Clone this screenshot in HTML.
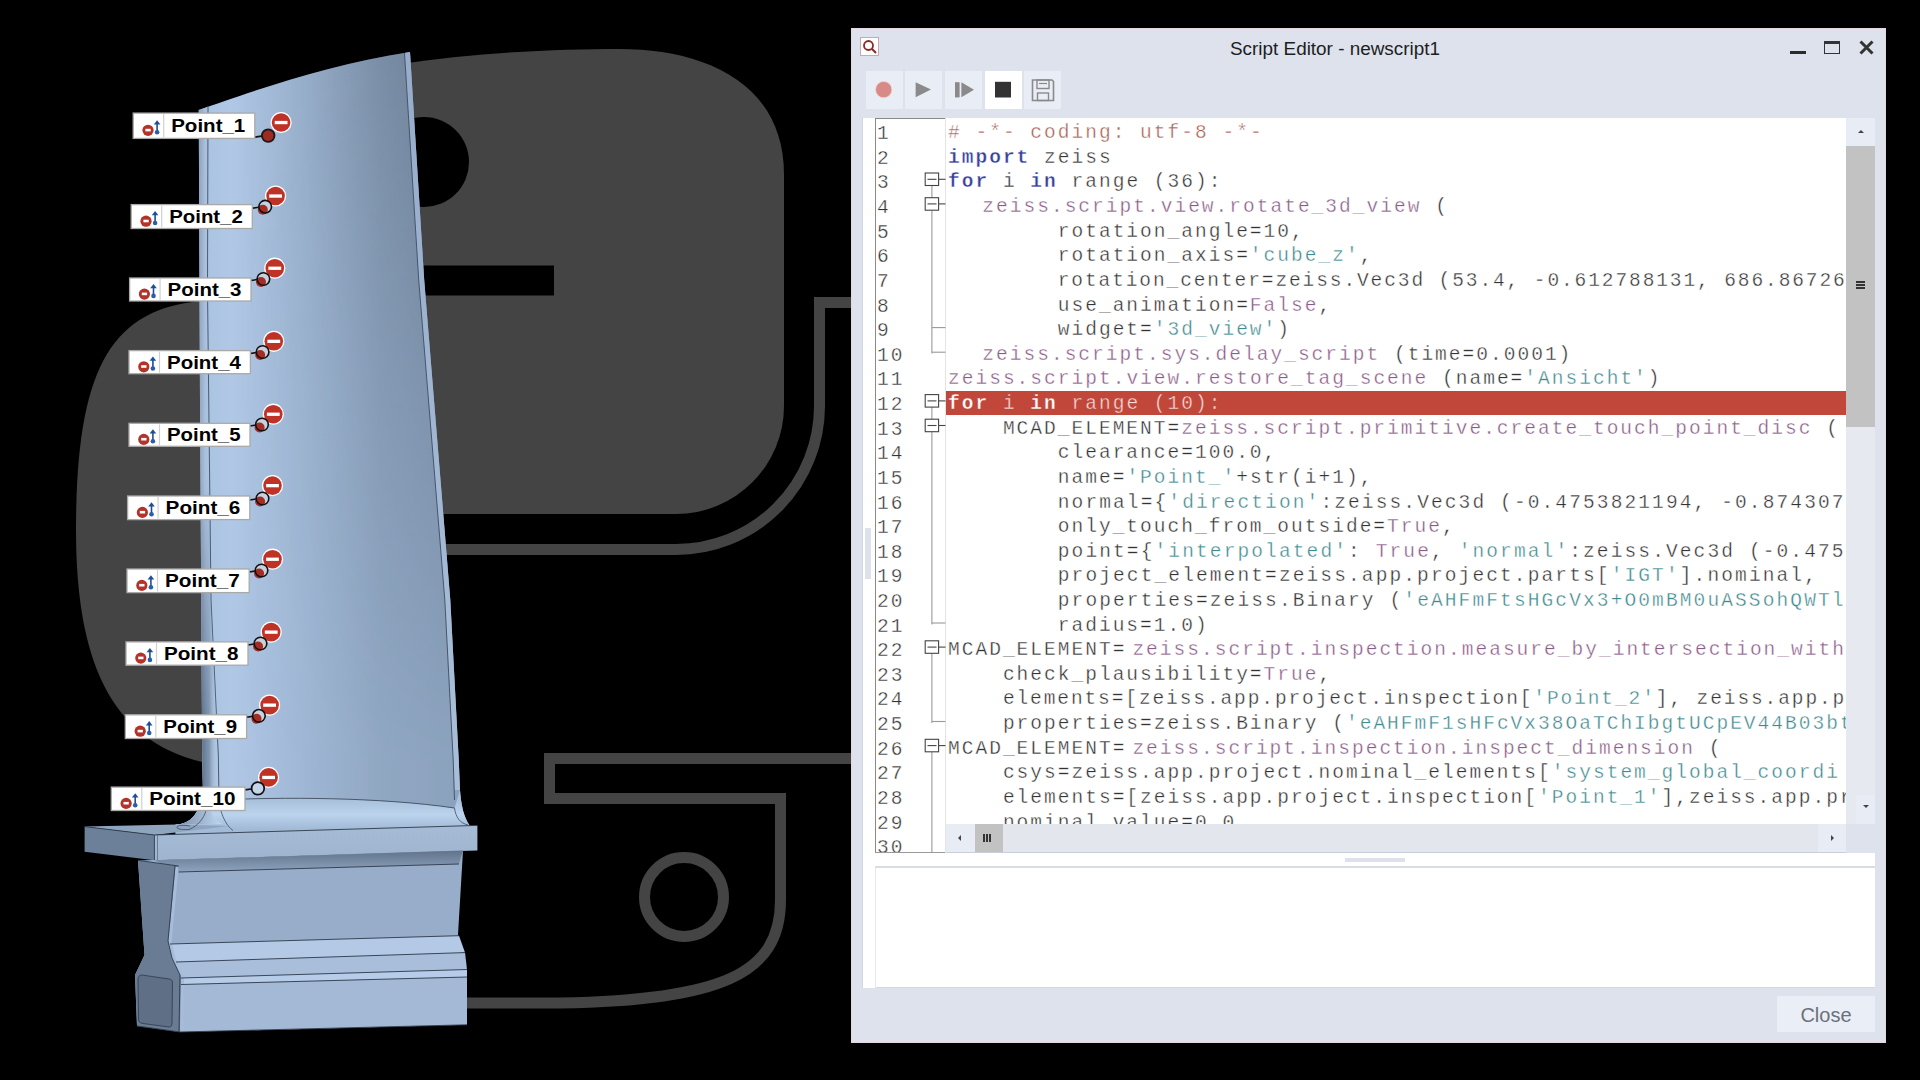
<!DOCTYPE html>
<html><head><meta charset="utf-8">
<style>
html,body{margin:0;padding:0;background:#000;width:1920px;height:1080px;overflow:hidden}
#scene{position:absolute;left:0;top:0}
.lt{font-family:"Liberation Sans",sans-serif;font-weight:bold;font-size:18px;fill:#000}
#win{position:absolute;left:851px;top:28px;width:1035px;height:1015px;background:#dde2ec;box-shadow:0 0 0 1px #e6d6de inset}
#title{position:absolute;left:379px;top:0;height:40px;white-space:nowrap;font-family:"Liberation Sans",sans-serif;font-size:18.9px;line-height:42px;color:#1e1e1e}
.tb{position:absolute;top:43px;width:37px;height:38px;background:#e9edf5}
#edit{position:absolute;left:11px;top:90px;width:1013px;height:870px;background:#fff;border-left:1px solid #d2d6dd;box-sizing:border-box}
#gutter{position:absolute;left:12px;top:0;width:71px;height:735px;border-left:1px solid #8a8a8a;border-top:1px solid #8a8a8a;border-bottom:1px solid #999;box-sizing:border-box;overflow:hidden}
.num{position:absolute;left:1px;height:24.55px;font-family:"Liberation Mono",monospace;font-size:19.5px;letter-spacing:2.02px;line-height:24.55px;color:#333;white-space:pre;-webkit-text-stroke:0.35px #fff}
#sepline{position:absolute;left:82px;top:0;width:1px;height:735px;background:#e4e4e4}
#code{position:absolute;left:83px;top:0;width:900px;height:706px;overflow:hidden}
.ln{position:absolute;height:24.55px;font-family:"Liberation Mono",monospace;font-size:19.5px;letter-spacing:2.02px;line-height:24.55px;white-space:pre;color:#333;-webkit-text-stroke:0.35px #fff}
.k{color:#363f9c;font-weight:bold}
.d{color:#333}
.p{color:#8a5a88}
.s{color:#3f8a8f}
.c{color:#a85e52}
.hk{color:#fff;font-weight:bold;-webkit-text-stroke:0.35px #c0473a}
.hd{color:#f6dcd8;-webkit-text-stroke:0.35px #c0473a}
#hl{position:absolute;left:0;top:272.5px;width:900px;height:24px;background:#c0473a}
#vsb{position:absolute;left:983px;top:0;width:29px;height:706px;background:#e6eaf0}
#hsb{position:absolute;left:83px;top:706px;width:900px;height:29px;background:#e3e7ed;border-bottom:1px solid #c8ceda;box-sizing:border-box}
#corner{position:absolute;left:983px;top:706px;width:29px;height:29px;background:#dde2ec}
#outsep{position:absolute;left:12px;top:748px;width:1000px;height:2px;background:#d8dce4}
#closebtn{position:absolute;left:926px;top:968px;width:98px;height:36px;background:#eaeef6;font-family:"Liberation Sans",sans-serif;font-size:20px;color:#6b717a;text-align:center;line-height:38px}
</style></head><body>
<svg id="scene" width="1920" height="1080" viewBox="0 0 1920 1080">
<defs>
 <linearGradient id="bladeG" x1="199" y1="0" x2="460" y2="0" gradientUnits="userSpaceOnUse">
  <stop offset="0" stop-color="#a8c2e0"/>
  <stop offset="0.12" stop-color="#b0c8e6"/>
  <stop offset="0.38" stop-color="#a2bad7"/>
  <stop offset="0.7" stop-color="#92a9c5"/>
  <stop offset="1" stop-color="#8ea5c1"/>
 </linearGradient>
 <linearGradient id="bladeV" x1="230" y1="760" x2="430" y2="90" gradientUnits="userSpaceOnUse">
  <stop offset="0" stop-color="#000" stop-opacity="0"/>
  <stop offset="0.45" stop-color="#000" stop-opacity="0.03"/>
  <stop offset="1" stop-color="#1a2535" stop-opacity="0.22"/>
 </linearGradient>
 <linearGradient id="bladeH" x1="240" y1="0" x2="440" y2="0" gradientUnits="userSpaceOnUse">
  <stop offset="0" stop-color="#2a3442" stop-opacity="0"/>
  <stop offset="0.3" stop-color="#2a3442" stop-opacity="0.08"/>
  <stop offset="1" stop-color="#2a3442" stop-opacity="0.34"/>
 </linearGradient>
 <linearGradient id="bladeMG" x1="0" y1="60" x2="0" y2="760" gradientUnits="userSpaceOnUse">
  <stop offset="0" stop-color="#fff"/>
  <stop offset="0.45" stop-color="#888"/>
  <stop offset="1" stop-color="#111"/>
 </linearGradient>
 <mask id="bladeM" maskUnits="userSpaceOnUse" x="0" y="0" width="1920" height="1080"><rect x="0" y="0" width="1920" height="1080" fill="url(#bladeMG)"/></mask>
 <linearGradient id="trailG" x1="0" y1="50" x2="0" y2="800" gradientUnits="userSpaceOnUse">
  <stop offset="0" stop-color="#97accb"/>
  <stop offset="1" stop-color="#a9bfd9"/>
 </linearGradient>
 <linearGradient id="leadG" x1="199" y1="0" x2="215" y2="0" gradientUnits="userSpaceOnUse">
  <stop offset="0" stop-color="#8ea4c0"/>
  <stop offset="0.4" stop-color="#aac1dd"/>
  <stop offset="1" stop-color="#b2c9e5"/>
 </linearGradient>
 <linearGradient id="leadDG" x1="202" y1="0" x2="218" y2="0" gradientUnits="userSpaceOnUse">
  <stop offset="0" stop-color="#5f7189" stop-opacity="0.95"/>
  <stop offset="0.45" stop-color="#7489a3" stop-opacity="0.8"/>
  <stop offset="1" stop-color="#b5cbe6" stop-opacity="0"/>
 </linearGradient>
 <linearGradient id="leadMG" x1="0" y1="480" x2="0" y2="720" gradientUnits="userSpaceOnUse">
  <stop offset="0" stop-color="#000"/>
  <stop offset="1" stop-color="#fff"/>
 </linearGradient>
 <mask id="leadM" maskUnits="userSpaceOnUse" x="0" y="0" width="1920" height="1080"><rect x="0" y="0" width="1920" height="1080" fill="url(#leadMG)"/></mask>
 <linearGradient id="filL" x1="180" y1="0" x2="222" y2="0" gradientUnits="userSpaceOnUse">
  <stop offset="0" stop-color="#8094ad"/>
  <stop offset="0.5" stop-color="#9fb4cf"/>
  <stop offset="1" stop-color="#c2d8f2"/>
 </linearGradient>
 <linearGradient id="filG" x1="0" y1="800" x2="0" y2="829" gradientUnits="userSpaceOnUse">
  <stop offset="0" stop-color="#aac1dc"/>
  <stop offset="0.5" stop-color="#bcd3ee"/>
  <stop offset="1" stop-color="#a3bad6"/>
 </linearGradient>
 <linearGradient id="bandA" x1="0" y1="851" x2="0" y2="872" gradientUnits="userSpaceOnUse">
  <stop offset="0" stop-color="#62748c"/>
  <stop offset="1" stop-color="#8ea3bf"/>
 </linearGradient>
 <linearGradient id="frontG" x1="0" y1="826" x2="0" y2="860" gradientUnits="userSpaceOnUse">
  <stop offset="0" stop-color="#a6bbd6"/>
  <stop offset="1" stop-color="#9fb4cf"/>
 </linearGradient>
 <linearGradient id="shankG" x1="0" y1="850" x2="0" y2="1032" gradientUnits="userSpaceOnUse">
  <stop offset="0" stop-color="#6a7d96"/>
  <stop offset="0.08" stop-color="#8da3bf"/>
  <stop offset="0.45" stop-color="#95abc7"/>
  <stop offset="1" stop-color="#a0b6d2"/>
 </linearGradient>
</defs>
<!-- python logo -->
<g fill="#444">
 <path d="M200,301 C110,310 76,370 76,530 C76,660 110,740 202,762 L300,762 L300,301 Z"/>
 <path d="M400,64 C480,52 560,49 620,49 C700,49 784,80 784,175 L784,406 A108,108 0 0 1 676,514 L400,514 Z"/>
</g>
<circle cx="424" cy="162" r="45" fill="#000"/>
<rect x="400" y="265.5" width="154" height="30" fill="#000"/>
<g fill="none" stroke="#444" stroke-width="11">
 <path d="M860,302.5 L819.5,302.5 L819.5,406 A143.5,143.5 0 0 1 676,549.5 L400,549.5"/>
 <path d="M860,758.5 L549.5,758.5 L549.5,798.5 L780.5,798.5 L780.5,900 C780.5,975 720,1000 560,1003 L440,1003"/>
 <circle cx="684" cy="897" r="39.5"/>
</g>
<!-- blade -->
<path id="bladeP" d="M198.75,110 C250,92 330,64 410,52 L424.2,280 L450.3,600 L458.75,760 L460,790 C461,805 464,818 470,826 L470,840 L175.6,840 L175.6,824.5 C190,824 200,815 203,790 L202.2,755 L200,400 Z" fill="url(#bladeG)"/>
<path d="M198.75,110 C250,92 330,64 410,52 L424.2,280 L450.3,600 L458.75,760 L460,790 C461,805 464,818 470,826 L470,840 L175.6,840 L175.6,824.5 C190,824 200,815 203,790 L202.2,755 L200,400 Z" fill="url(#bladeH)" mask="url(#bladeM)"/>
<!-- trailing strip -->
<path d="M404.5,53 L410,52 L424.2,280 L450.3,600 L458.75,760 L460,790 L454.5,790 L453.2,760 L444.8,600 L418.7,280 Z" fill="url(#trailG)"/>
<path d="M404.5,53 L418.7,280 L444.8,600 L453.2,760 L454.5,800" fill="none" stroke="#46566a" stroke-width="1"/>
<!-- leading strip -->
<path d="M198.75,110 L208,107 L207.5,290 L211,600 L218.3,755 L219,800 L203,800 L202.2,755 L200,400 Z" fill="url(#leadG)"/>
<path d="M208,106 L207.5,290 L211,600 L218.3,755 L219,800" fill="none" stroke="#4a5a70" stroke-width="1"/>
<path d="M200,420 L202.2,755 L203,790 C202,805 199,812 196,816 L214,812 C216,805 217,798 218.5,790 L218.3,755 L211,600 L208,420 Z" fill="url(#leadDG)" mask="url(#leadM)"/>
<!-- root fillet -->
<path d="M205,800 C260,797 380,797 454.5,808 L460,790 C461,805 464,818 470,826 L470,840 L175.6,840 L175.6,824.5 C190,824 200,815 203,790 Z" fill="url(#filG)"/>
<path d="M175.6,824.5 C190,824 200,815 203,790 L206,790 C206,806 212,818 222,824 Z" fill="url(#filL)"/>
<path d="M84.6,826.6 L177,824.5 L230,826 L154.4,835 Z" fill="#8fa4be"/>
<path d="M205.8,811 C204,818 198,826 189,829.5 C183,830 176,829 177,827 C178,825 185,825 190,826" fill="none" stroke="#3e4c5e" stroke-width="0.8"/>
<path d="M219,800 C280,797 380,797 454.5,808" fill="none" stroke="#3e4c5e" stroke-width="0.9"/>
<path d="M221,811 C223,818 227,826 233,830.6" fill="none" stroke="#3e4c5e" stroke-width="0.8"/>
<path d="M454.5,808 C456,818 460,823 468,825" fill="none" stroke="#3e4c5e" stroke-width="0.8"/>
<!-- platform -->
<path d="M84.6,826.6 L154.4,835 L154.4,860.3 L84.6,851.8 Z" fill="#6d809a"/>
<path d="M154.4,835 L477.4,825.4 L477.4,850.6 L154.4,860.3 Z" fill="url(#frontG)"/>
<path d="M84.6,826.6 L154.4,835 L477.4,825.4" fill="none" stroke="#2d3a4a" stroke-width="0.9"/>
<path d="M154.4,835 L154.4,860.3" fill="none" stroke="#2d3a4a" stroke-width="0.8"/>
<path d="M157.5,834.9 L157.5,860.2" fill="none" stroke="#55657a" stroke-width="0.7"/>
<!-- shank -->
<path d="M138,860.4 L463,850.6 L457.7,940 L467,975 L467,1024.8 L180,1032 L137,1026 L135,975 L144.5,955 Z" fill="#97adc9"/>
<path d="M154.4,860.3 L463,850.6 L459,864 L178.6,872 Z" fill="url(#bandA)"/>
<path d="M170,944 L459,935.7 L465,952.6 L176,962 Z" fill="#b3c9e6"/>
<path d="M176,962 L465,952.6 L467,969.5 L181,978 Z" fill="#a8bedb"/>
<path d="M181,978 L467,969.5 L467,977 L181,984.5 Z" fill="#b6cce8"/>
<path d="M181,984.5 L467,977 L467,1024.8 L180,1032 Z" fill="#a3b9d5"/>
<path d="M138,860.4 L178.6,866 L168,940 L172,958 L181,975 L180,1032 L137,1026 L135,975 L144.5,955 Z" fill="#6a7c94"/>
<path d="M177,867 L170,942 L174,959 L182.5,976 L182,1031" fill="none" stroke="#a6bcd8" stroke-width="3.2"/>
<path d="M178.6,872 L459,864 M170,944 L459,935.7 M176,962 L465,952.6 M181,978 L467,969.5 M181,984.5 L467,977 M175,866 L168,941 L172,958 L180,975 L179,1032 M138,860.4 L178.6,866 M137,1026 L180,1032 L467,1024.8" fill="none" stroke="#2d3a4a" stroke-width="0.9"/>
<path d="M142,975 C139,975 138,977 138,980 L138.5,1019 C138.5,1022 140,1023 143,1023.5 L169,1027 C171,1027 172,1026 172,1023 L172.5,983 C172.5,980 171,979 169,979 Z" fill="#5e6f86" stroke="#2d3a4a" stroke-width="0.8"/>
<!-- labels -->
<line x1="254.8" y1="137.1" x2="263.2" y2="135.9" stroke="#111" stroke-width="1.6"/>
<circle cx="281.1" cy="122.5" r="10.6" fill="#fff"/>
<circle cx="281.1" cy="122.5" r="9.3" fill="#bf3327"/>
<rect x="274.7" y="120.9" width="12.8" height="3.3" fill="#fff"/>
<circle cx="268.2" cy="135.6" r="6.3" fill="#9e2a22" stroke="#181818" stroke-width="1.8"/>
<rect x="133.2" y="113.1" width="121.6" height="25.3" fill="#fff" stroke="#a9a9a9" stroke-width="1.3"/>
<line x1="163.7" y1="114.1" x2="163.7" y2="137.4" stroke="#d0d0d0" stroke-width="1.2"/>
<circle cx="148.0" cy="130.3" r="5.6" fill="#b3322a"/>
<rect x="145.4" y="128.8" width="5.3" height="2.6" fill="#fff"/>
<line x1="157.1" y1="123.8" x2="157.1" y2="132.2" stroke="#1c4f96" stroke-width="1.6"/>
<path d="M153.8,124.5 L157.1,120.2 L160.4,124.5 Z" fill="#1c4f96"/>
<circle cx="157.1" cy="132.2" r="2.3" fill="#2a5ea8"/>
<text x="171.2" y="132.3" class="lt" textLength="74.1" lengthAdjust="spacingAndGlyphs">Point_1</text>
<line x1="252.3" y1="208.2" x2="260.2" y2="207.0" stroke="#111" stroke-width="1.6"/>
<circle cx="275.6" cy="196.0" r="10.6" fill="#fff"/>
<circle cx="275.6" cy="196.0" r="9.3" fill="#bf3327"/>
<rect x="269.2" y="194.4" width="12.8" height="3.3" fill="#fff"/>
<circle cx="265.2" cy="206.7" r="6.3" fill="#c8d2de"/>
<circle cx="262.8" cy="209.7" r="5" fill="#a32d25"/>
<circle cx="265.2" cy="206.7" r="6.3" fill="none" stroke="#111" stroke-width="1.6"/>
<rect x="131.2" y="204.6" width="121.1" height="23.9" fill="#fff" stroke="#a9a9a9" stroke-width="1.3"/>
<line x1="161.7" y1="205.6" x2="161.7" y2="227.5" stroke="#d0d0d0" stroke-width="1.2"/>
<circle cx="146.0" cy="221.2" r="5.6" fill="#b3322a"/>
<rect x="143.4" y="219.7" width="5.3" height="2.6" fill="#fff"/>
<line x1="155.1" y1="214.6" x2="155.1" y2="223.0" stroke="#1c4f96" stroke-width="1.6"/>
<path d="M151.8,215.2 L155.1,211.0 L158.4,215.2 Z" fill="#1c4f96"/>
<circle cx="155.1" cy="223.0" r="2.3" fill="#2a5ea8"/>
<text x="169.2" y="223.2" class="lt" textLength="73.6" lengthAdjust="spacingAndGlyphs">Point_2</text>
<line x1="251.0" y1="280.5" x2="258.4" y2="279.3" stroke="#111" stroke-width="1.6"/>
<circle cx="274.8" cy="268.2" r="10.6" fill="#fff"/>
<circle cx="274.8" cy="268.2" r="9.3" fill="#bf3327"/>
<rect x="268.4" y="266.6" width="12.8" height="3.3" fill="#fff"/>
<circle cx="263.4" cy="279.0" r="6.3" fill="#c8d2de"/>
<circle cx="261.0" cy="282.0" r="5" fill="#a32d25"/>
<circle cx="263.4" cy="279.0" r="6.3" fill="none" stroke="#111" stroke-width="1.6"/>
<rect x="129.6" y="278.0" width="121.4" height="23.0" fill="#fff" stroke="#a9a9a9" stroke-width="1.3"/>
<line x1="160.1" y1="279.0" x2="160.1" y2="300.0" stroke="#d0d0d0" stroke-width="1.2"/>
<circle cx="144.4" cy="294.1" r="5.6" fill="#b3322a"/>
<rect x="141.8" y="292.6" width="5.3" height="2.6" fill="#fff"/>
<line x1="153.5" y1="287.5" x2="153.5" y2="295.9" stroke="#1c4f96" stroke-width="1.6"/>
<path d="M150.2,288.2 L153.5,283.9 L156.8,288.2 Z" fill="#1c4f96"/>
<circle cx="153.5" cy="295.9" r="2.3" fill="#2a5ea8"/>
<text x="167.6" y="296.1" class="lt" textLength="73.9" lengthAdjust="spacingAndGlyphs">Point_3</text>
<line x1="250.4" y1="353.5" x2="257.6" y2="352.3" stroke="#111" stroke-width="1.6"/>
<circle cx="273.8" cy="341.3" r="10.6" fill="#fff"/>
<circle cx="273.8" cy="341.3" r="9.3" fill="#bf3327"/>
<rect x="267.4" y="339.7" width="12.8" height="3.3" fill="#fff"/>
<circle cx="262.6" cy="352.0" r="6.3" fill="#c8d2de"/>
<circle cx="260.2" cy="355.0" r="5" fill="#a32d25"/>
<circle cx="262.6" cy="352.0" r="6.3" fill="none" stroke="#111" stroke-width="1.6"/>
<rect x="129.0" y="350.6" width="121.4" height="23.1" fill="#fff" stroke="#a9a9a9" stroke-width="1.3"/>
<line x1="159.5" y1="351.6" x2="159.5" y2="372.7" stroke="#d0d0d0" stroke-width="1.2"/>
<circle cx="143.8" cy="366.8" r="5.6" fill="#b3322a"/>
<rect x="141.2" y="365.2" width="5.3" height="2.6" fill="#fff"/>
<line x1="152.9" y1="360.1" x2="152.9" y2="368.5" stroke="#1c4f96" stroke-width="1.6"/>
<path d="M149.6,360.8 L152.9,356.5 L156.2,360.8 Z" fill="#1c4f96"/>
<circle cx="152.9" cy="368.5" r="2.3" fill="#2a5ea8"/>
<text x="167.0" y="368.8" class="lt" textLength="73.9" lengthAdjust="spacingAndGlyphs">Point_4</text>
<line x1="250.0" y1="426.0" x2="257.0" y2="424.8" stroke="#111" stroke-width="1.6"/>
<circle cx="273.3" cy="414.2" r="10.6" fill="#fff"/>
<circle cx="273.3" cy="414.2" r="9.3" fill="#bf3327"/>
<rect x="266.9" y="412.6" width="12.8" height="3.3" fill="#fff"/>
<circle cx="262.0" cy="424.5" r="6.3" fill="#c8d2de"/>
<circle cx="259.6" cy="427.5" r="5" fill="#a32d25"/>
<circle cx="262.0" cy="424.5" r="6.3" fill="none" stroke="#111" stroke-width="1.6"/>
<rect x="129.0" y="423.3" width="121.0" height="23.0" fill="#fff" stroke="#a9a9a9" stroke-width="1.3"/>
<line x1="159.5" y1="424.3" x2="159.5" y2="445.3" stroke="#d0d0d0" stroke-width="1.2"/>
<circle cx="143.8" cy="439.4" r="5.6" fill="#b3322a"/>
<rect x="141.2" y="437.9" width="5.3" height="2.6" fill="#fff"/>
<line x1="152.9" y1="432.8" x2="152.9" y2="441.2" stroke="#1c4f96" stroke-width="1.6"/>
<path d="M149.6,433.5 L152.9,429.2 L156.2,433.5 Z" fill="#1c4f96"/>
<circle cx="152.9" cy="441.2" r="2.3" fill="#2a5ea8"/>
<text x="167.0" y="441.4" class="lt" textLength="73.5" lengthAdjust="spacingAndGlyphs">Point_5</text>
<line x1="249.8" y1="500.0" x2="257.5" y2="498.8" stroke="#111" stroke-width="1.6"/>
<circle cx="272.5" cy="485.6" r="10.6" fill="#fff"/>
<circle cx="272.5" cy="485.6" r="9.3" fill="#bf3327"/>
<rect x="266.1" y="484.0" width="12.8" height="3.3" fill="#fff"/>
<circle cx="262.5" cy="498.5" r="6.3" fill="#c8d2de"/>
<circle cx="260.1" cy="501.5" r="5" fill="#a32d25"/>
<circle cx="262.5" cy="498.5" r="6.3" fill="none" stroke="#111" stroke-width="1.6"/>
<rect x="127.6" y="496.0" width="122.2" height="23.6" fill="#fff" stroke="#a9a9a9" stroke-width="1.3"/>
<line x1="158.1" y1="497.0" x2="158.1" y2="518.6" stroke="#d0d0d0" stroke-width="1.2"/>
<circle cx="142.4" cy="512.4" r="5.6" fill="#b3322a"/>
<rect x="139.8" y="510.9" width="5.3" height="2.6" fill="#fff"/>
<line x1="151.5" y1="505.8" x2="151.5" y2="514.2" stroke="#1c4f96" stroke-width="1.6"/>
<path d="M148.2,506.5 L151.5,502.2 L154.8,506.5 Z" fill="#1c4f96"/>
<circle cx="151.5" cy="514.2" r="2.3" fill="#2a5ea8"/>
<text x="165.6" y="514.4" class="lt" textLength="74.7" lengthAdjust="spacingAndGlyphs">Point_6</text>
<line x1="249.2" y1="572.0" x2="256.5" y2="570.8" stroke="#111" stroke-width="1.6"/>
<circle cx="272.5" cy="559.2" r="10.6" fill="#fff"/>
<circle cx="272.5" cy="559.2" r="9.3" fill="#bf3327"/>
<rect x="266.1" y="557.6" width="12.8" height="3.3" fill="#fff"/>
<circle cx="261.5" cy="570.5" r="6.3" fill="#c8d2de"/>
<circle cx="259.1" cy="573.5" r="5" fill="#a32d25"/>
<circle cx="261.5" cy="570.5" r="6.3" fill="none" stroke="#111" stroke-width="1.6"/>
<rect x="127.0" y="569.0" width="122.2" height="23.6" fill="#fff" stroke="#a9a9a9" stroke-width="1.3"/>
<line x1="157.5" y1="570.0" x2="157.5" y2="591.6" stroke="#d0d0d0" stroke-width="1.2"/>
<circle cx="141.8" cy="585.4" r="5.6" fill="#b3322a"/>
<rect x="139.2" y="583.9" width="5.3" height="2.6" fill="#fff"/>
<line x1="150.9" y1="578.8" x2="150.9" y2="587.2" stroke="#1c4f96" stroke-width="1.6"/>
<path d="M147.6,579.5 L150.9,575.2 L154.2,579.5 Z" fill="#1c4f96"/>
<circle cx="150.9" cy="587.2" r="2.3" fill="#2a5ea8"/>
<text x="165.0" y="587.4" class="lt" textLength="74.7" lengthAdjust="spacingAndGlyphs">Point_7</text>
<line x1="248.0" y1="645.0" x2="255.5" y2="643.8" stroke="#111" stroke-width="1.6"/>
<circle cx="271.2" cy="632.1" r="10.6" fill="#fff"/>
<circle cx="271.2" cy="632.1" r="9.3" fill="#bf3327"/>
<rect x="264.8" y="630.5" width="12.8" height="3.3" fill="#fff"/>
<circle cx="260.5" cy="643.5" r="6.3" fill="#c8d2de"/>
<circle cx="258.1" cy="646.5" r="5" fill="#a32d25"/>
<circle cx="260.5" cy="643.5" r="6.3" fill="none" stroke="#111" stroke-width="1.6"/>
<rect x="126.0" y="641.9" width="122.0" height="23.3" fill="#fff" stroke="#a9a9a9" stroke-width="1.3"/>
<line x1="156.5" y1="642.9" x2="156.5" y2="664.2" stroke="#d0d0d0" stroke-width="1.2"/>
<circle cx="140.8" cy="658.1" r="5.6" fill="#b3322a"/>
<rect x="138.2" y="656.6" width="5.3" height="2.6" fill="#fff"/>
<line x1="149.9" y1="651.5" x2="149.9" y2="659.9" stroke="#1c4f96" stroke-width="1.6"/>
<path d="M146.6,652.2 L149.9,647.9 L153.2,652.2 Z" fill="#1c4f96"/>
<circle cx="149.9" cy="659.9" r="2.3" fill="#2a5ea8"/>
<text x="164.0" y="660.1" class="lt" textLength="74.5" lengthAdjust="spacingAndGlyphs">Point_8</text>
<line x1="246.6" y1="717.3" x2="253.9" y2="716.1" stroke="#111" stroke-width="1.6"/>
<circle cx="269.6" cy="705.1" r="10.6" fill="#fff"/>
<circle cx="269.6" cy="705.1" r="9.3" fill="#bf3327"/>
<rect x="263.2" y="703.5" width="12.8" height="3.3" fill="#fff"/>
<circle cx="258.9" cy="715.8" r="6.3" fill="#c8d2de"/>
<circle cx="256.5" cy="718.8" r="5" fill="#a32d25"/>
<circle cx="258.9" cy="715.8" r="6.3" fill="none" stroke="#111" stroke-width="1.6"/>
<rect x="125.3" y="714.8" width="121.3" height="23.7" fill="#fff" stroke="#a9a9a9" stroke-width="1.3"/>
<line x1="155.8" y1="715.8" x2="155.8" y2="737.5" stroke="#d0d0d0" stroke-width="1.2"/>
<circle cx="140.2" cy="731.2" r="5.6" fill="#b3322a"/>
<rect x="137.6" y="729.8" width="5.3" height="2.6" fill="#fff"/>
<line x1="149.2" y1="724.6" x2="149.2" y2="733.0" stroke="#1c4f96" stroke-width="1.6"/>
<path d="M145.9,725.4 L149.2,721.0 L152.5,725.4 Z" fill="#1c4f96"/>
<circle cx="149.2" cy="733.0" r="2.3" fill="#2a5ea8"/>
<text x="163.3" y="733.2" class="lt" textLength="73.8" lengthAdjust="spacingAndGlyphs">Point_9</text>
<line x1="245.0" y1="789.9" x2="252.9" y2="788.7" stroke="#111" stroke-width="1.6"/>
<circle cx="268.6" cy="777.4" r="10.6" fill="#fff"/>
<circle cx="268.6" cy="777.4" r="9.3" fill="#bf3327"/>
<rect x="262.2" y="775.8" width="12.8" height="3.3" fill="#fff"/>
<circle cx="257.9" cy="788.4" r="6.3" fill="#c5d6ea" stroke="#111" stroke-width="1.7"/>
<rect x="111.3" y="787.1" width="133.7" height="23.4" fill="#fff" stroke="#a9a9a9" stroke-width="1.3"/>
<line x1="141.8" y1="788.1" x2="141.8" y2="809.5" stroke="#d0d0d0" stroke-width="1.2"/>
<circle cx="126.1" cy="803.4" r="5.6" fill="#b3322a"/>
<rect x="123.5" y="801.9" width="5.3" height="2.6" fill="#fff"/>
<line x1="135.2" y1="796.8" x2="135.2" y2="805.2" stroke="#1c4f96" stroke-width="1.6"/>
<path d="M131.9,797.5 L135.2,793.2 L138.5,797.5 Z" fill="#1c4f96"/>
<circle cx="135.2" cy="805.2" r="2.3" fill="#2a5ea8"/>
<text x="149.3" y="805.4" class="lt" textLength="86.2" lengthAdjust="spacingAndGlyphs">Point_10</text>
</svg>
<div id="win">
 <div style="position:absolute;left:9px;top:9px;width:19px;height:19px;background:#fff;border:1px solid #c9a9a9;box-sizing:border-box"></div>
 <svg style="position:absolute;left:9px;top:9px" width="20" height="20"><circle cx="8.5" cy="8.5" r="4.5" fill="none" stroke="#8b2a24" stroke-width="1.8"/><line x1="11.8" y1="11.8" x2="16" y2="16" stroke="#8b2a24" stroke-width="2"/></svg>
 <div id="title">Script Editor - newscript1</div>
 <div style="position:absolute;left:939px;top:23px;width:16px;height:3px;background:#2b2b2b"></div>
 <div style="position:absolute;left:973px;top:12.5px;width:16px;height:13px;border:1.6px solid #333;border-top-width:3px;box-sizing:border-box"></div>
 <svg style="position:absolute;left:1007px;top:11px" width="18" height="18"><path d="M2.5,2.5 L14.5,14.5 M14.5,2.5 L2.5,14.5" stroke="#333" stroke-width="3"/></svg>
 <div class="tb" style="left:14.5px"></div>
 <div class="tb" style="left:54px"></div>
 <div class="tb" style="left:94px"></div>
 <div class="tb" style="left:133.7px;background:#fff"></div>
 <div class="tb" style="left:173px"></div>
 <svg style="position:absolute;left:0;top:40px" width="220" height="50">
  <circle cx="32.7" cy="21.6" r="8.2" fill="#d88a86" stroke="#f3d9d7" stroke-width="0.8"/>
  <path d="M64.6,14.3 L80,21.6 L64.6,29.2 Z" fill="#8a8a8a"/>
  <rect x="104" y="14.2" width="4.6" height="15.2" fill="#8a8a8a"/>
  <path d="M110.4,14.3 L123,21.8 L110.4,29.2 Z" fill="#8a8a8a"/>
  <rect x="144" y="13.8" width="16" height="15.7" fill="#333"/>
  <path d="M181.5,12 L201,12 L202.5,13.5 L202.5,32.5 L181.5,32.5 Z" fill="none" stroke="#8a8a8a" stroke-width="1.6"/>
  <rect x="186" y="12" width="12" height="8.5" fill="none" stroke="#8a8a8a" stroke-width="1.4"/>
  <line x1="188" y1="15.5" x2="196" y2="15.5" stroke="#8a8a8a" stroke-width="1.2"/>
  <rect x="186.5" y="25" width="11" height="7.5" fill="none" stroke="#8a8a8a" stroke-width="1.4"/>
 </svg>
 <div id="edit">
  <div id="gutter"><div class="num" style="top:3.20px">1</div><div class="num" style="top:27.82px">2</div><div class="num" style="top:52.44px">3</div><div class="num" style="top:77.06px">4</div><div class="num" style="top:101.68px">5</div><div class="num" style="top:126.30px">6</div><div class="num" style="top:150.92px">7</div><div class="num" style="top:175.54px">8</div><div class="num" style="top:200.16px">9</div><div class="num" style="top:224.78px">10</div><div class="num" style="top:249.40px">11</div><div class="num" style="top:274.02px">12</div><div class="num" style="top:298.64px">13</div><div class="num" style="top:323.26px">14</div><div class="num" style="top:347.88px">15</div><div class="num" style="top:372.50px">16</div><div class="num" style="top:397.12px">17</div><div class="num" style="top:421.74px">18</div><div class="num" style="top:446.36px">19</div><div class="num" style="top:470.98px">20</div><div class="num" style="top:495.60px">21</div><div class="num" style="top:520.22px">22</div><div class="num" style="top:544.84px">23</div><div class="num" style="top:569.46px">24</div><div class="num" style="top:594.08px">25</div><div class="num" style="top:618.70px">26</div><div class="num" style="top:643.32px">27</div><div class="num" style="top:667.94px">28</div><div class="num" style="top:692.56px">29</div><div class="num" style="top:717.18px">30</div></div>
  <div id="sepline"></div>
  <div id="code">
   <div id="hl"></div>
   <div class="ln" style="top:3.20px;left:2.00px"><span class="c"># -*- coding: utf-8 -*-</span></div><div class="ln" style="top:27.82px;left:2.00px"><span class="k">import</span><span class="d"> zeiss</span></div><div class="ln" style="top:52.44px;left:2.00px"><span class="k">for</span><span class="d"> i </span><span class="k">in</span><span class="d"> range (36):</span></div><div class="ln" style="top:77.06px;left:36.30px"><span class="p">zeiss.script.view.rotate_3d_view</span><span class="d"> (</span></div><div class="ln" style="top:101.68px;left:111.76px"><span class="d">rotation_angle=10,</span></div><div class="ln" style="top:126.30px;left:111.76px"><span class="d">rotation_axis=</span><span class="s">&#x27;cube_z&#x27;</span><span class="d">,</span></div><div class="ln" style="top:150.92px;left:111.76px;letter-spacing:1.90px"><span class="d">rotation_center=zeiss.Vec3d (53.4, -0.612788131, 686.86726</span></div><div class="ln" style="top:175.54px;left:111.76px"><span class="d">use_animation=</span><span class="p">False</span><span class="d">,</span></div><div class="ln" style="top:200.16px;left:111.76px"><span class="d">widget=</span><span class="s">&#x27;3d_view&#x27;</span><span class="d">)</span></div><div class="ln" style="top:224.78px;left:36.30px"><span class="p">zeiss.script.sys.delay_script</span><span class="d"> (time=0.0001)</span></div><div class="ln" style="top:249.40px;left:2.00px"><span class="p">zeiss.script.view.restore_tag_scene</span><span class="d"> (name=</span><span class="s">&#x27;Ansicht&#x27;</span><span class="d">)</span></div><div class="ln" style="top:274.02px;left:2.00px"><span class="hk">for</span><span class="hd"> i </span><span class="hk">in</span><span class="hd"> range (10):</span></div><div class="ln" style="top:298.64px;left:56.88px"><span class="d">MCAD_ELEMENT=</span><span class="p">zeiss.script.primitive.create_touch_point_disc</span><span class="d"> (</span></div><div class="ln" style="top:323.26px;left:111.76px"><span class="d">clearance=100.0,</span></div><div class="ln" style="top:347.88px;left:111.76px"><span class="d">name=</span><span class="s">&#x27;Point_&#x27;</span><span class="d">+str(i+1),</span></div><div class="ln" style="top:372.50px;left:111.76px;letter-spacing:2.12px"><span class="d">normal={</span><span class="s">&#x27;direction&#x27;</span><span class="d">:zeiss.Vec3d (-0.4753821194, -0.874307</span></div><div class="ln" style="top:397.12px;left:111.76px"><span class="d">only_touch_from_outside=</span><span class="p">True</span><span class="d">,</span></div><div class="ln" style="top:421.74px;left:111.76px;letter-spacing:2.12px"><span class="d">point={</span><span class="s">&#x27;interpolated&#x27;</span><span class="d">: </span><span class="p">True</span><span class="d">, </span><span class="s">&#x27;normal&#x27;</span><span class="d">:zeiss.Vec3d (-0.475</span></div><div class="ln" style="top:446.36px;left:111.76px;letter-spacing:2.12px"><span class="d">project_element=zeiss.app.project.parts[</span><span class="s">&#x27;IGT&#x27;</span><span class="d">].nominal,</span></div><div class="ln" style="top:470.98px;left:111.76px;letter-spacing:2.12px"><span class="d">properties=zeiss.Binary (</span><span class="s">&#x27;eAHFmFtsHGcVx3+O0mBM0uASSohQWTl</span></div><div class="ln" style="top:495.60px;left:111.76px"><span class="d">radius=1.0)</span></div><div class="ln" style="top:520.22px;left:2.00px"><span class="d">MCAD_ELEMENT=</span><span class="p" style="margin-left:6px">zeiss.script.inspection.measure_by_intersection_with</span></div><div class="ln" style="top:544.84px;left:56.88px"><span class="d">check_plausibility=</span><span class="p">True</span><span class="d">,</span></div><div class="ln" style="top:569.46px;left:56.88px;letter-spacing:1.90px"><span class="d">elements=[zeiss.app.project.inspection[</span><span class="s">&#x27;Point_2&#x27;</span><span class="d">], zeiss.app.pr</span></div><div class="ln" style="top:594.08px;left:56.88px"><span class="d">properties=zeiss.Binary (</span><span class="s">&#x27;eAHFmF1sHFcVx38OaTChIbgtUCpEV44B03bt</span></div><div class="ln" style="top:618.70px;left:2.00px"><span class="d">MCAD_ELEMENT=</span><span class="p" style="margin-left:6px">zeiss.script.inspection.inspect_dimension</span><span class="d"> (</span></div><div class="ln" style="top:643.32px;left:56.88px"><span class="d">csys=zeiss.app.project.nominal_elements[</span><span class="s">&#x27;system_global_coordi</span></div><div class="ln" style="top:667.94px;left:56.88px"><span class="d">elements=[zeiss.app.project.inspection[</span><span class="s">&#x27;Point_1&#x27;</span><span class="d">],zeiss.app.pr</span></div><div class="ln" style="top:692.56px;left:56.88px"><span class="d">nominal_value=0.0,</span></div><div class="ln" style="top:717.18px;left:56.88px"><span class="d"></span></div>
  </div>
  <svg style="position:absolute;left:0;top:0" width="90" height="740" fill="none" stroke="#444" stroke-width="1.1">
   <line x1="68.9" y1="67.5" x2="68.9" y2="235.6" stroke="#999"/>
<line x1="68.9" y1="209.6" x2="82.5" y2="209.6" stroke="#999"/>
<line x1="68.9" y1="234.2" x2="82.5" y2="234.2" stroke="#999"/>
<line x1="68.9" y1="289.1" x2="68.9" y2="506.4" stroke="#999"/>
<line x1="68.9" y1="505.0" x2="82.5" y2="505.0" stroke="#999"/>
<line x1="68.9" y1="535.3" x2="68.9" y2="604.9" stroke="#999"/>
<line x1="68.9" y1="603.5" x2="82.5" y2="603.5" stroke="#999"/>
<line x1="68.9" y1="633.8" x2="68.9" y2="735.0" stroke="#999"/>
<rect x="62.2" y="55.0" width="13.4" height="12.5" fill="#fff"/>
<line x1="64.5" y1="61.3" x2="73.5" y2="61.3"/>
<line x1="75.6" y1="61.3" x2="82.5" y2="61.3"/>
<rect x="62.2" y="79.7" width="13.4" height="12.5" fill="#fff"/>
<line x1="64.5" y1="85.9" x2="73.5" y2="85.9"/>
<line x1="75.6" y1="85.9" x2="82.5" y2="85.9"/>
<rect x="62.2" y="276.6" width="13.4" height="12.5" fill="#fff"/>
<line x1="64.5" y1="282.9" x2="73.5" y2="282.9"/>
<line x1="75.6" y1="282.9" x2="82.5" y2="282.9"/>
<rect x="62.2" y="301.2" width="13.4" height="12.5" fill="#fff"/>
<line x1="64.5" y1="307.5" x2="73.5" y2="307.5"/>
<line x1="75.6" y1="307.5" x2="82.5" y2="307.5"/>
<rect x="62.2" y="522.8" width="13.4" height="12.5" fill="#fff"/>
<line x1="64.5" y1="529.1" x2="73.5" y2="529.1"/>
<line x1="75.6" y1="529.1" x2="82.5" y2="529.1"/>
<rect x="62.2" y="621.3" width="13.4" height="12.5" fill="#fff"/>
<line x1="64.5" y1="627.6" x2="73.5" y2="627.6"/>
<line x1="75.6" y1="627.6" x2="82.5" y2="627.6"/>
  </svg>
  <div id="vsb">
   <div style="position:absolute;left:0;top:0;width:29px;height:28px;background:#e8edf5"></div>
   <div style="position:absolute;left:11.5px;top:12px;width:0;height:0;border-left:3px solid transparent;border-right:3px solid transparent;border-bottom:3px solid #444"></div>
   <div style="position:absolute;left:0;top:28px;width:29px;height:281px;background:#c2c2c2"></div>
   <div style="position:absolute;left:10px;top:163px;width:9px;height:2px;background:#333;box-shadow:0 3px 0 #333,0 6px 0 #333"></div>
   <div style="position:absolute;left:10px;top:677px;width:19px;height:29px;background:#e8edf5"></div>
   <div style="position:absolute;left:16.5px;top:687px;width:0;height:0;border-left:3px solid transparent;border-right:3px solid transparent;border-top:3px solid #444"></div>
  </div>
  <div id="hsb">
   <div style="position:absolute;left:0;top:0;width:29px;height:28px;background:#e8edf5"></div>
   <div style="position:absolute;left:12px;top:11px;width:0;height:0;border-top:3px solid transparent;border-bottom:3px solid transparent;border-right:3px solid #444"></div>
   <div style="position:absolute;left:29px;top:0;width:28px;height:28px;background:#c2c2c2"></div>
   <div style="position:absolute;left:37px;top:10px;width:2px;height:8px;background:#333;box-shadow:3px 0 0 #333,6px 0 0 #333"></div>
   <div style="position:absolute;left:872px;top:0;width:28px;height:28px;background:#e8edf5"></div>
   <div style="position:absolute;left:885px;top:11px;width:0;height:0;border-top:3px solid transparent;border-bottom:3px solid transparent;border-left:3px solid #444"></div>
  </div>
  <div id="corner"></div>
  <div style="position:absolute;left:482px;top:740px;width:60px;height:4px;background:#dde2ea"></div>
  <div id="outsep"></div>
  <div style="position:absolute;left:1.5px;top:410px;width:6.5px;height:50.5px;background:#dde2ea"></div>
  <div style="position:absolute;left:12px;top:869px;width:1000px;height:1px;background:#d4d8df"></div>
  <div style="position:absolute;left:12px;top:749px;width:1px;height:120px;background:#dfe3e9"></div>
  <div style="position:absolute;left:12px;top:750px;width:1000px;height:120px;border-left:1px solid #e6e9ef;box-sizing:border-box"></div>
 </div>
 <div id="closebtn">Close</div>
</div>
</body></html>
